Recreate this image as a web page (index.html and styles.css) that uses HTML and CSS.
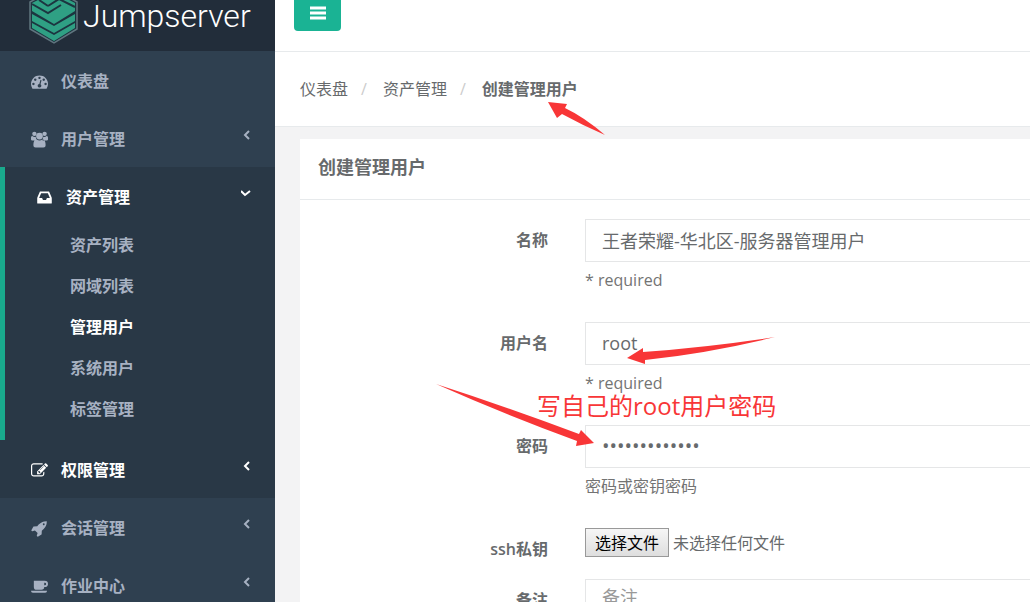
FILE: index.html
```html
<!DOCTYPE html>
<html lang="zh-CN">
  <head>
    <meta charset="UTF-8" />
    <meta name="viewport" content="width=device-width, initial-scale=1.0" />
    <title>Jumpserver</title>
    <link rel="stylesheet" href="styles.css">
  </head>

  <body>
    <nav class="sidebar">
      <a class="brand" href="#">
        <svg class="logo" viewBox="0 0 50 56">
          <path d="M25 1 48 14v27L25 55 1 41V14z" fill="#1c3540" stroke="#60757f" stroke-width="1.5" />
          <path d="M25 4 46 15v8L25 36 3 23v-8z" fill="#2fa084" />
          <path d="M3 16l16 9 13-8M46 19l-16-8-11 7M10 12l9 6" fill="none" stroke="#1c3540" stroke-width="2" />
          <path d="M3 26l22 12 21-12v7L25 45 3 33z" fill="#2fa084" />
          <path d="M3 35l22 12 21-12v5L25 53 3 40z" fill="#2fa084" />
        </svg>
        <span>Jumpserver</span>
      </a>
      <ul class="menu">
        <li>
          <a href="#">
            <svg class="icon" viewBox="0 0 1792 1792"><path d="M384 1152q0-53-37.5-90.5t-90.5-37.5-90.5 37.5-37.5 90.5 37.5 90.5 90.5 37.5 90.5-37.5 37.5-90.5zm192-448q0-53-37.5-90.5t-90.5-37.5-90.5 37.5-37.5 90.5 37.5 90.5 90.5 37.5 90.5-37.5 37.5-90.5zm428 481l101-382q6-26-7.5-48.5t-38.5-29.5-48 6.5-30 39.5l-101 382q-60 5-107 43.5t-63 98.5q-20 77 20 146t117 89 146-20 89-117q16-60-6-117t-72-91zm660-33q0-53-37.5-90.5t-90.5-37.5-90.5 37.5-37.5 90.5 37.5 90.5 90.5 37.5 90.5-37.5 37.5-90.5zm-640-640q0-53-37.5-90.5t-90.5-37.5-90.5 37.5-37.5 90.5 37.5 90.5 90.5 37.5 90.5-37.5 37.5-90.5zm448 192q0-53-37.5-90.5t-90.5-37.5-90.5 37.5-37.5 90.5 37.5 90.5 90.5 37.5 90.5-37.5 37.5-90.5zm320 448q0 261-141 483-19 29-54 29h-1402q-35 0-54-29-141-221-141-483 0-182 71-348t191-286 286-191 348-71 348 71 286 191 191 286 71 348z" /></svg>
            <span>仪表盘</span>
          </a>
        </li>
        <li>
          <a href="#">
            <svg class="icon" viewBox="0 0 18 18"><circle cx="3.6" cy="3" r="2.3" /><circle cx="14.4" cy="3" r="2.3" /><circle cx="9" cy="5.400" r="3.600" /><path d="M0 9V7q0-2 1.400-1.800Q3.500 7 5 6q0 2 1.400 3.400L5 10H1.500Q0 10 0 9zM18 9V7q0-2-1.400-1.800Q14.500 7 13 6q0 2-1.400 3.400L13 10h3.500Q18 10 18 9zM2.500 15q0-6 3.500-6Q9 11 12 9q3.500 0 3.500 6 0 2.500-2.300 2.500H4.800Q2.500 17.500 2.500 15z" /></svg>
            <span>用户管理</span>
            <svg class="arrow" viewBox="0 0 10 10"><path d="M8 1 4 5l4 4" /></svg>
          </a>
        </li>
        <li class="active">
          <a href="#">
            <svg class="icon" viewBox="0 0 1792 1792"><path d="M1151 960h316q-1-3-2.500-8t-2.500-8l-212-496h-708l-212 496q-1 2-2.500 8t-2.500 8h316l95 192h320zm513 30v482q0 26-19 45t-45 19h-1408q-26 0-45-19t-19-45v-482q0-62 25-123l238-552q10-25 36.500-42t52.500-17h832q26 0 52.500 17t36.500 42l238 552q25 61 25 123z" /></svg>
            <span>资产管理</span>
            <svg class="arrow" viewBox="0 0 10 10"><path d="M0 3l4 4 5-4" /></svg>
          </a>
          <ul class="submenu">
            <li><a href="#">资产列表</a></li>
            <li><a href="#">网域列表</a></li>
            <li><a class="current" href="#">管理用户</a></li>
            <li><a href="#">系统用户</a></li>
            <li><a href="#">标签管理</a></li>
          </ul>
        </li>
        <li class="hover">
          <a href="#">
            <svg class="icon" viewBox="0 0 1792 1792"><path d="M888 1184l116-116-152-152-116 116v56h96v96h56zm440-720q-16-16-33 1l-350 350q-17 17-1 33t33-1l350-350q17-17 1-33zm80 594v190q0 119-84.500 203.500t-203.500 84.500h-832q-119 0-203.500-84.500t-84.500-203.500v-832q0-119 84.500-203.500t203.500-84.500h832q63 0 117 25 15 7 18 23 3 17-9 29l-49 49q-14 14-32 8-23-6-45-6h-832q-66 0-113 47t-47 113v832q0 66 47 113t113 47h832q66 0 113-47t47-113v-126q0-13 9-22l64-64q15-15 35-7t20 29zm-96-738l288 288-672 672h-288v-288zm444 132l-92 92-288-288 92-92q28-28 68-28t68 28l152 152q28 28 28 68t-28 68z" /></svg>
            <span>权限管理</span>
            <svg class="arrow" viewBox="0 0 10 10"><path d="M8 1 4 5l4 4" /></svg>
          </a>
        </li>
        <li>
          <a href="#">
            <svg class="icon" viewBox="0 0 1792 1792"><path d="M1440 448q0-40-28-68t-68-28-68 28-28 68 28 68 68 28 68-28 28-68zm224-288q0 249-75.500 430.500t-253.500 360.500q-81 80-195 176l-20 379q-2 16-16 26l-384 224q-7 4-16 4-12 0-23-9l-64-64q-13-14-8-32l85-276-281-281-276 85q-3 1-9 1-14 0-23-9l-64-64q-17-19-5-39l224-384q10-14 26-16l379-20q96-114 176-195 188-187 358-258t431-71q14 0 24 9.500t10 22.500z" /></svg>
            <span>会话管理</span>
            <svg class="arrow" viewBox="0 0 10 10"><path d="M8 1 4 5l4 4" /></svg>
          </a>
        </li>
        <li>
          <a href="#">
            <svg class="icon" viewBox="0 0 18 18"><path fill-rule="evenodd" d="M3 3h11.500q3.500 0 3.500 3.300t-3.500 3.300H14q0 2.900-3 2.900H6q-3 0-3-3zM14 5v2.700h.5q1.500 0 1.500-1.400T14.500 5zM0 13.500h17q0 2-2 2H2q-2 0-2-2z" /></svg>
            <span>作业中心</span>
            <svg class="arrow" viewBox="0 0 10 10"><path d="M8 1 4 5l4 4" /></svg>
          </a>
        </li>
      </ul>
    </nav>

    <main>
      <div class="topbar">
        <button class="toggle" type="button" aria-label="菜单">
          <svg viewBox="0 0 16 14"><path d="M0 2h16M0 7h16M0 12h16" /></svg>
        </button>
      </div>
      <ol class="breadcrumb">
        <li><a href="#">仪表盘</a></li>
        <li><a href="#">资产管理</a></li>
        <li><strong>创建管理用户</strong></li>
      </ol>

      <section class="panel">
        <h5>创建管理用户</h5>
        <form>
          <div class="row">
            <label for="name">名称</label>
            <div class="field">
              <input id="name" type="text" value="王者荣耀-华北区-服务器管理用户">
              <p>* required</p>
            </div>
          </div>
          <div class="row">
            <label for="username">用户名</label>
            <div class="field">
              <input id="username" type="text" value="root">
              <p>* required</p>
            </div>
          </div>
          <div class="row">
            <label for="password">密码</label>
            <div class="field">
              <input id="password" type="password" value="1234567890123">
              <p>密码或密钥密码</p>
            </div>
          </div>
          <div class="row">
            <label for="key">ssh私钥</label>
            <div class="field file">
              <input id="key" type="file" tabindex="-1" hidden>
              <button type="button" onclick="document.getElementById('key').click()">选择文件</button>
              <span>未选择任何文件</span>
            </div>
          </div>
          <div class="row">
            <label for="comment">备注</label>
            <div class="field">
              <textarea id="comment" placeholder="备注"></textarea>
            </div>
          </div>
        </form>
      </section>
    </main>

    <!-- notes drawn over the form -->
    <svg class="marks" width="1030" height="602" viewBox="0 0 1030 602">
      <path d="M548 102l19 2-2 4Q584 117 605 135 582 125 562 114l-5 4z" />
      <path d="M627 358l16-10v4Q710 347 775 337 710 353 645 360v4z" />
      <path d="M436 384Q510 408 579 434l2-4 13 13-18 3 1-5Q506 415 436 384z" />
    </svg>
    <div class="note">写自己的root用户密码</div>
  </body>
</html>
```
FILE: styles.css
```css
* {
  box-sizing: border-box;
}
body {
  margin: 0;
  height: 100vh;
  display: flex;
  position: relative;
  overflow: hidden;
  background: #f3f3f4;
  color: #676a6c;
  font-family: "Open Sans", "Noto Sans CJK SC", sans-serif;
  font-size: 16px;
  line-height: 24px;
}
a {
  color: inherit;
  text-decoration: none;
}
ul,
ol {
  margin: 0;
  padding: 0;
  list-style: none;
}
input,
textarea,
button {
  font: inherit;
}

/* sidebar */
.sidebar {
  flex: 0 0 275px;
  background: #2f4050;
  color: #a7b1c2;
  font-weight: 600;
}
.brand {
  display: flex;
  align-items: flex-end;
  height: 51px;
  padding: 0 0 7px 29px;
  background: #222d3a;
  color: #fff;
  font-family: Roboto, sans-serif;
  font-size: 32px;
  font-weight: 300;
  line-height: 56px;
}
.logo {
  flex: none;
  width: 50px;
  height: 56px;
  margin-right: 4px;
}
.menu > li > a {
  display: flex;
  align-items: center;
  height: 58px;
  padding: 2px 24px 0 31px;
}
.icon {
  width: 17px;
  height: 17px;
  margin-right: 13px;
  fill: currentColor;
}
.arrow {
  width: 10px;
  height: 10px;
  margin: 0 0 8px auto;
  fill: none;
  stroke: currentColor;
  stroke-width: 2;
}
.menu .active,
.menu .hover {
  background: #293846;
}
.menu .active {
  border-left: 5px solid #19aa8d;
  padding-bottom: 10px;
}
.active > a,
.hover > a,
.submenu .current {
  color: #fff;
}
.submenu a {
  display: block;
  padding-left: 65px;
  line-height: 41px;
}

/* page head */
main {
  flex: 1;
  min-width: 0;
}
.topbar {
  height: 52px;
  padding-left: 19px;
  background: #fff;
  border-bottom: 1px solid #e7eaec;
}
.toggle {
  display: flex;
  align-items: flex-end;
  justify-content: center;
  width: 47px;
  height: 31px;
  padding: 0 0 11px;
  background: #1ab394;
  border: 0;
  border-radius: 0 0 4px 4px;
}
.toggle svg {
  width: 16px;
  height: 14px;
  stroke: #fff;
  stroke-width: 3;
}
.breadcrumb {
  display: flex;
  height: 75px;
  padding: 25px 25px 0;
  background: #fff;
  border-bottom: 1px solid #e7eaec;
}
.breadcrumb li + li::before {
  content: "/";
  padding: 0 16px 0 13px;
  color: #ccc;
}
.breadcrumb strong {
  font-weight: 600;
}

/* form */
.panel {
  margin: 12px 0 0 25px;
  background: #fff;
}
.panel h5 {
  margin: 0;
  padding: 16px 18px 20px;
  border-bottom: 1px solid #e7eaec;
  font-size: 18px;
  font-weight: 700;
}
form {
  padding-top: 19px;
}
.row {
  display: flex;
  gap: 37px;
}
.row label {
  flex: 0 0 248px;
  padding-top: 9px;
  text-align: right;
  font-weight: 600;
}
.field {
  flex: 1;
  min-width: 0;
}
.field input,
.field textarea {
  display: block;
  width: 100%;
  height: 43px;
  padding: 5px 16px 7px;
  border: 1px solid #e5e6e7;
  border-right: 0;
  border-radius: 0;
  background: #fff;
  color: #676a6c;
  font-size: 18px;
}
.field input[type="password"] {
  font-size: 20px;
}
.field textarea {
  height: 120px;
  resize: none;
}
.field textarea::placeholder {
  color: #999;
}
.field p {
  margin: 6px 0 30px;
  color: #737373;
}
.field input[hidden] {
  display: none;
}
.file {
  display: flex;
  align-items: center;
  gap: 4px;
  height: 29px;
  margin-bottom: 22px;
}
.file button {
  height: 29px;
  padding: 0 9px;
  background: linear-gradient(#f6f6f6, #dedede);
  border: 1px solid #999;
  color: #000;
  line-height: 24px;
}

.marks {
  position: absolute;
  top: 0;
  left: 0;
  fill: #f83637;
  pointer-events: none;
}
.note {
  position: absolute;
  top: 388px;
  left: 537px;
  color: #f83637;
  font-size: 24px;
  line-height: 36px;
}
```
